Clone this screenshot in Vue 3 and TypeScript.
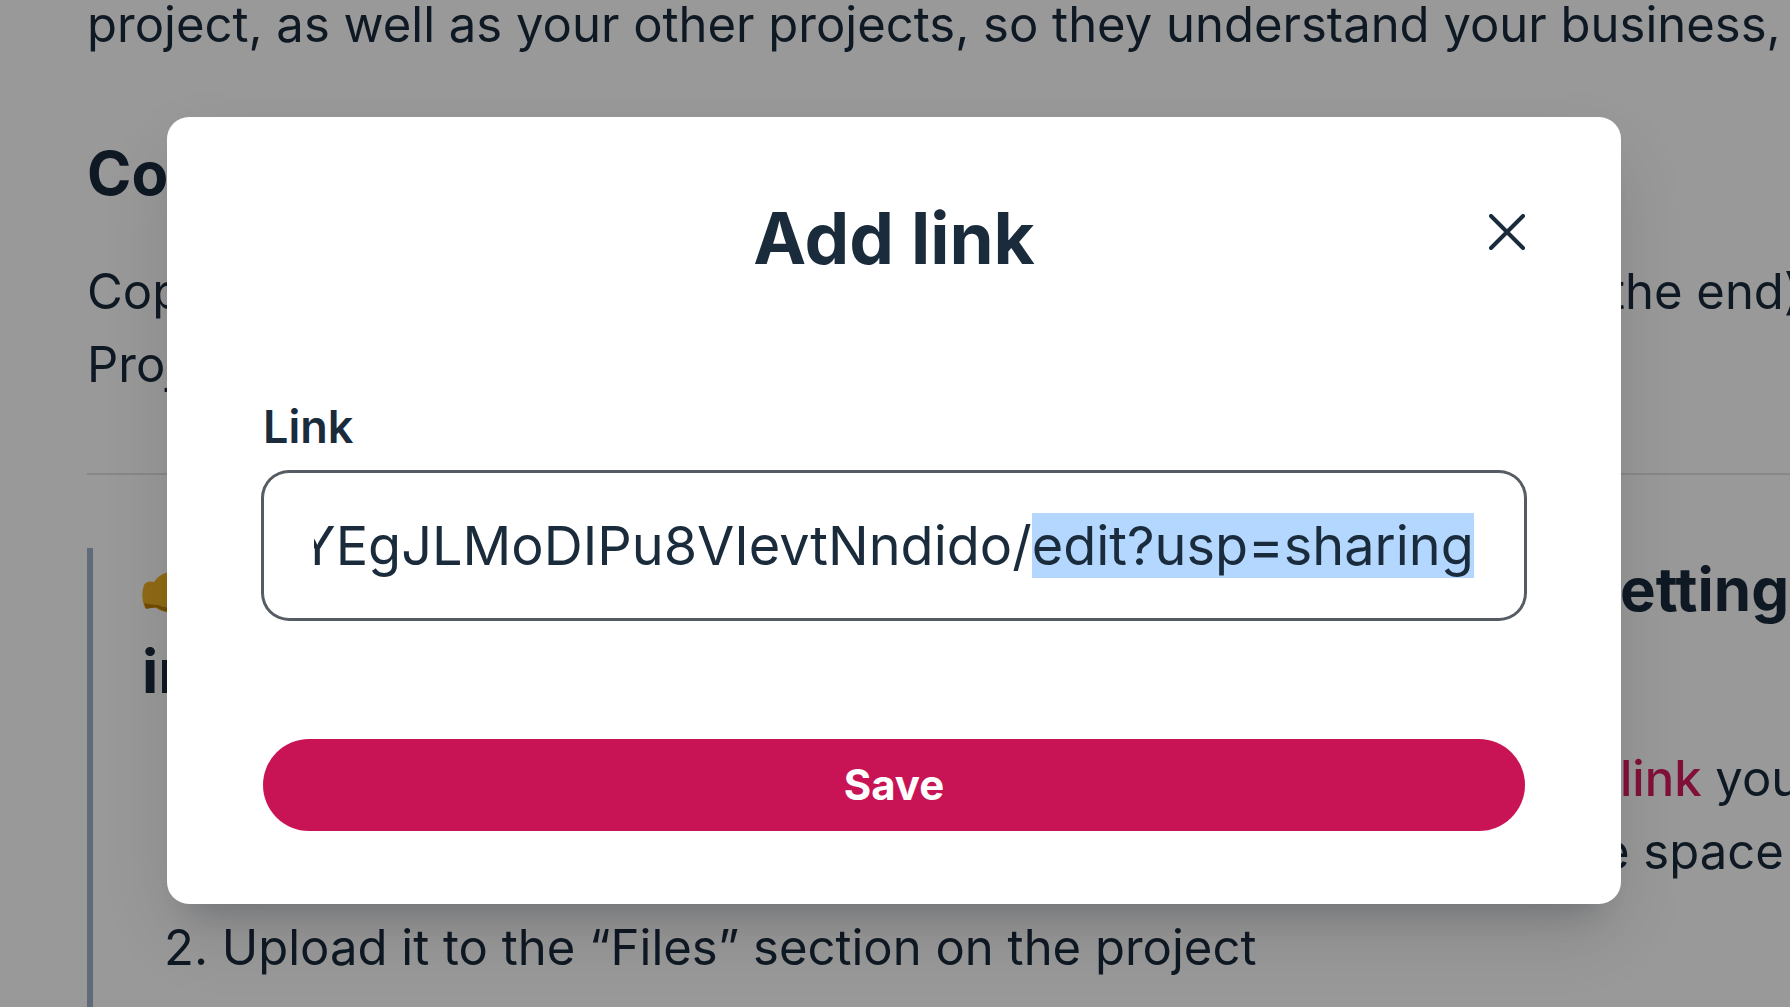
<script setup lang="ts">
import { nextTick, onMounted, ref } from 'vue'

const link = ref('YEgJLMoDIPu8VIevtNndido/edit?usp=sharing')
const linkInput = ref<HTMLInputElement | null>(null)

onMounted(async () => {
  await nextTick()
  const field = linkInput.value
  if (!field) return
  field.focus()
  field.setSelectionRange(link.value.indexOf('edit'), link.value.length)
  field.scrollLeft = field.scrollWidth
})
</script>

<template>
  <div class="page">
    <main class="article">
      <p class="copy">project, as well as your other projects, so they understand your business, c</p>

      <h2 class="heading">Co</h2>
      <p class="copy split"><span>Cop</span><span class="rest">the end)</span></p>
      <p class="copy">Proj</p>

      <hr class="rule" />

      <blockquote class="quote">
        <h3 class="heading split">
          <span>
            <svg class="hand" viewBox="0 0 60 48" aria-hidden="true">
              <path fill="#f0b323" d="M2 14Q5 9 12 11Q18 2 28 1H34V14H57Q60 18 57 22H42V42Q24 44 14 37L3 37Q-2 26 2 14Z" />
              <path fill="#c07f08" d="M2 32Q9 34 16 34Q26 38 42 37V42Q24 43 14 36L4 38Z" />
            </svg>
          </span>
          <span class="rest near">etting</span>
        </h3>
        <h3 class="heading">in</h3>
        <div class="step first">
          <p class="copy split"><span></span><span class="rest near"><a class="anchor" href="#">link</a> you</span></p>
          <p class="copy split"><span></span><span class="rest far">e space</span></p>
        </div>
        <p class="copy step">2. Upload it to the “Files” section on the project</p>
      </blockquote>
    </main>

    <div class="backdrop">
      <form class="dialog" role="dialog" aria-labelledby="dialog-title" @submit.prevent>
        <header class="header">
          <h1 id="dialog-title" class="title">Add link</h1>
          <button class="close" type="button" aria-label="Close">
            <svg viewBox="0 0 36 36" aria-hidden="true">
              <path d="M2 2L34 34M34 2L2 34" fill="none" stroke="currentColor" stroke-width="4" stroke-linecap="round" />
            </svg>
          </button>
        </header>
        <label class="label" for="link">Link</label>
        <input id="link" ref="linkInput" v-model="link" class="input" type="text" spellcheck="false" autocomplete="off" />
        <button class="save" type="submit">Save</button>
      </form>
    </div>
  </div>
</template>

<style>
body {
  margin: 0;
  overflow: hidden;
}
</style>

<style scoped>
.page {
  position: relative;
  height: 100vh;
  overflow: hidden;
  background: #fff;
  color: #1a2b3c;
  font-family: Inter, "Liberation Sans", sans-serif;
}

.article {
  display: flex;
  flex-direction: column;
  box-sizing: border-box;
  min-height: 100vh;
  margin-top: -12px;
  padding-left: 87px;
  white-space: nowrap;
}

.copy {
  margin: 0;
  font-size: 49px;
  line-height: 73px;
}

.heading {
  margin: 0;
  font-size: 60px;
  line-height: 82px;
  font-weight: 700;
}

.article > .heading {
  margin: 71px 0 41px;
}

.split {
  display: flex;
  justify-content: space-between;
}

.rest {
  box-sizing: border-box;
  width: 181px;
}

.rest.near {
  width: 170px;
}

.rest.far {
  width: 189px;
}

.rule {
  width: 100%;
  height: 2px;
  margin: 72px 0 73px;
  border: 0;
  background: #e0e3e6;
}

.quote {
  flex: 1;
  margin: 0;
  padding: 0 0 73px 49px;
  border-left: 6px solid #9eb2c9;
}

.hand {
  width: 60px;
  height: 48px;
  vertical-align: middle;
}

.step {
  margin: 23px 0 0 22px;
}

.step.first {
  margin-top: 30px;
}

.anchor {
  color: #d81b60;
  font-weight: 500;
  text-decoration: none;
}

.backdrop {
  position: absolute;
  inset: 0;
  box-sizing: border-box;
  padding: 117px 169px 0 167px;
  background: rgba(0, 0, 0, 0.4);
}

.dialog {
  display: flex;
  flex-direction: column;
  padding: 77px 96px 73px;
  border-radius: 22px;
  background: #fff;
  box-shadow:
    0 28px 28px -24px rgba(16, 30, 50, 0.2),
    0 32px 72px -8px rgba(0, 0, 0, 0.15);
}

.header {
  display: grid;
  grid-template-columns: 1fr auto 1fr;
  margin-bottom: 118px;
}

.title {
  grid-column: 2;
  margin: 0;
  font-size: 71px;
  line-height: 88px;
  font-weight: 700;
}

.close {
  justify-self: end;
  align-self: start;
  width: 36px;
  height: 36px;
  margin-top: 20px;
  padding: 0;
  border: 0;
  background: none;
  color: inherit;
}

.close svg {
  display: block;
}

.label {
  margin-bottom: 18px;
  font-size: 45px;
  line-height: 54px;
  font-weight: 600;
}

.input {
  box-sizing: border-box;
  width: 100%;
  height: 147px;
  margin-bottom: 120px;
  padding: 0 50px;
  border: 1px solid #555b62;
  border-radius: 26px;
  outline: 0;
  box-shadow: 0 0 0 2px #555b62;
  background: #fff;
  color: inherit;
  font-family: inherit;
  font-size: 54px;
  line-height: 68px;
}

.input::selection {
  background: #b3d7ff;
  color: #1a2b3c;
}

.save {
  height: 92px;
  padding: 0;
  border: 0;
  border-radius: 46px;
  background: #c81455;
  color: #fff;
  font-family: inherit;
  font-size: 42px;
  line-height: 52px;
  font-weight: 700;
}
</style>
